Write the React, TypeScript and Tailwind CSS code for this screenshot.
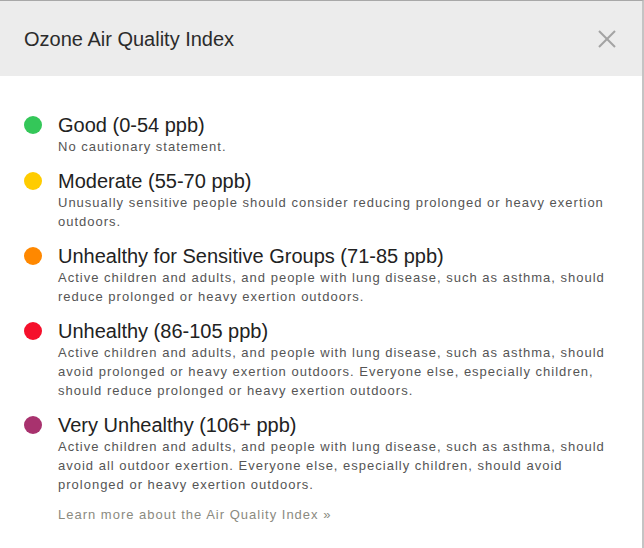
const levels = [
  {
    color: 'bg-[#34c759]',
    title: 'Good (0-54 ppb)',
    text: 'No cautionary statement.',
  },
  {
    color: 'bg-[#ffcc00]',
    title: 'Moderate (55-70 ppb)',
    text: 'Unusually sensitive people should consider reducing prolonged or heavy exertion outdoors.',
  },
  {
    color: 'bg-[#ff8800]',
    title: 'Unhealthy for Sensitive Groups (71-85 ppb)',
    text: 'Active children and adults, and people with lung disease, such as asthma, should reduce prolonged or heavy exertion outdoors.',
  },
  {
    color: 'bg-[#f5102b]',
    title: 'Unhealthy (86-105 ppb)',
    text: 'Active children and adults, and people with lung disease, such as asthma, should avoid prolonged or heavy exertion outdoors. Everyone else, especially children, should reduce prolonged or heavy exertion outdoors.',
  },
  {
    color: 'bg-[#a8326e]',
    title: 'Very Unhealthy (106+ ppb)',
    text: 'Active children and adults, and people with lung disease, such as asthma, should avoid all outdoor exertion. Everyone else, especially children, should avoid prolonged or heavy exertion outdoors.',
  },
];

export default function App() {
  return (
    <div className="w-[644px] h-[548px] bg-white border-t border-t-[#a8a8a8] border-r-2 border-r-[#c4c4c4] font-['Liberation_Sans',Arial,sans-serif] overflow-hidden">
      {/* header */}
      <div className="h-[75px] bg-[#ececec] flex items-center justify-between pl-6 pr-[26px]">
        <h2 className="text-[20px] text-[#2b2b2b] leading-none">Ozone Air Quality Index</h2>
        <button className="w-[18px] h-[18px] text-[#a3a3a3]">
          <svg viewBox="0 0 18 18" width="18" height="18" stroke="currentColor" strokeWidth="2">
            <line x1="1" y1="1" x2="17" y2="17" />
            <line x1="17" y1="1" x2="1" y2="17" />
          </svg>
        </button>
      </div>

      {/* levels */}
      <div className="pt-[37px] pl-6 pr-6">
        {levels.map((l) => (
          <div key={l.title} className="flex gap-4 mb-[13px]">
            <span className={`w-[18px] h-[18px] rounded-full shrink-0 mt-[3px] ${l.color}`} />
            <div>
              <div className="text-[20px] leading-[24px] text-[#222]">{l.title}</div>
              <p className="text-[13px] leading-[19px] tracking-[1px] text-[#555]">{l.text}</p>
            </div>
          </div>
        ))}
        <a className="block mt-[1px] pl-[34px] text-[13px] leading-[16px] tracking-[1px] text-[#8b8a7f]">
          Learn more about the Air Quality Index »
        </a>
      </div>
    </div>
  );
}
